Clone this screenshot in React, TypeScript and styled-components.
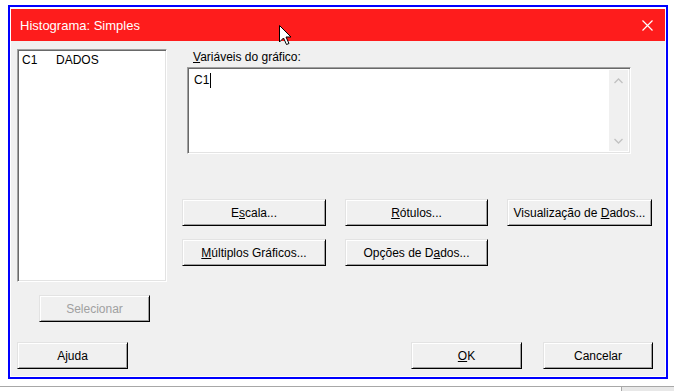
import React from 'react';
import styled, {createGlobalStyle} from 'styled-components';

const GlobalStyle = createGlobalStyle `
  html, body {
    margin: 0;
    padding: 0;
    background: #fff;
  }
  body {
    width: 674px;
    height: 391px;
    overflow: hidden;
    font-family: "Liberation Sans", Arial, sans-serif;
  }
`;

// accelerator letters are underlined like in the win32 dialog
const buttonsTop = [
    {label: <>E<u>s</u>cala...</>, width: 144},
    {label: <><u>R</u>ótulos...</>, width: 143},
    {label: <>Visualização de <u>D</u>ados...</>, width: 145}
];

const buttonsBottom = [
    {label: <><u>M</u>últiplos Gráficos...</>, width: 144},
    {label: <>Opções de D<u>a</u>dos...</>, width: 143}
];

const App: React.FC = () => {
    return (
        <Page>
            <GlobalStyle/>
            <Window>
                <TitleBar>
                    <Title>Histograma: Simples</Title>
                    <CloseIcon viewBox="0 0 11 11">
                        <path d="M0.5 0.5 L10.5 10.5 M10.5 0.5 L0.5 10.5" stroke="#fff" strokeWidth="1.2"/>
                    </CloseIcon>
                </TitleBar>

                <Body>
                    <TopArea>
                        <LeftColumn>
                            <ListBox>
                                <ListRow>
                                    <ColId>C1</ColId>
                                    <span>DADOS</span>
                                </ListRow>
                            </ListBox>
                            <Button width={111} offset={22} disabled>Selecionar</Button>
                        </LeftColumn>

                        <RightColumn>
                            <FieldLabel><u>V</u>ariáveis do gráfico:</FieldLabel>
                            <TextArea>
                                <TextContent>
                                    C1<Caret/>
                                </TextContent>
                                <ScrollBar>
                                    <svg width="9" height="6" viewBox="0 0 9 6">
                                        <path d="M0.5 5 L4.5 1 L8.5 5" stroke="#c2c2c2" strokeWidth="1.3" fill="none"/>
                                    </svg>
                                    <svg width="9" height="6" viewBox="0 0 9 6">
                                        <path d="M0.5 1 L4.5 5 L8.5 1" stroke="#c2c2c2" strokeWidth="1.3" fill="none"/>
                                    </svg>
                                </ScrollBar>
                            </TextArea>

                            <ButtonRow top={45}>
                                {buttonsTop.map((b, i) => (
                                    <Button key={i} width={b.width}>{b.label}</Button>
                                ))}
                            </ButtonRow>
                            <ButtonRow top={13}>
                                {buttonsBottom.map((b, i) => (
                                    <Button key={i} width={b.width}>{b.label}</Button>
                                ))}
                            </ButtonRow>
                        </RightColumn>
                    </TopArea>

                    <Footer>
                        <Button width={111}>Ajuda</Button>
                        <FooterRight>
                            <Button width={111}><u>O</u>K</Button>
                            <Button width={110}>Cancelar</Button>
                        </FooterRight>
                    </Footer>
                </Body>
            </Window>

            <Taskbar>
                <TaskbarSlot/>
            </Taskbar>

            <Cursor viewBox="0 0 13 21" width="13" height="21">
                <path
                    d="M0.5 0.5 L0.5 17 L4.5 13 L7.5 19.5 L10 18.5 L7 12 L12 12 Z"
                    fill="#fff"
                    stroke="#000"
                    strokeWidth="1"
                    strokeLinejoin="miter"/>
            </Cursor>
        </Page>
    );
};

export default App;

// styled-components

const Page = styled.div `
  position: relative;
  width: 674px;
  height: 391px;
  display: flex;
  flex-direction: column;
`;

const Window = styled.div `
  box-sizing: border-box;
  margin: 5px 0 0 8px;
  width: 660px;
  height: 374px;
  border: 2px solid #0000ff;
  padding: 2px 1px 1px 1px;
  background: #fff;
  display: flex;
  flex-direction: column;
`;

const TitleBar = styled.div `
  height: 32px;
  flex-shrink: 0;
  background: #fe1c1c;
  display: flex;
  align-items: center;
  justify-content: space-between;
  padding: 0 12px 0 9px;
`;

const Title = styled.span `
  color: #fff;
  font-size: 13px;
  font-family: "Liberation Sans", Arial, sans-serif;
`;

const CloseIcon = styled.svg `
  width: 11px;
  height: 11px;
`;

const Body = styled.div `
  flex: 1;
  background: #f0f0f0;
  padding: 8px 0 0 6px;
  display: flex;
  flex-direction: column;
  font-size: 12px;
  color: #000;
`;

const TopArea = styled.div `
  display: flex;
  gap: 15px;
`;

const LeftColumn = styled.div `
  display: flex;
  flex-direction: column;
  width: 150px;
  gap: 13px;
`;

const sunken = `
  box-sizing: border-box;
  background: #fff;
  border: 1px solid;
  border-color: #a0a0a0 #ffffff #ffffff #a0a0a0;
  box-shadow: inset 1px 1px 0 #696969, inset -1px -1px 0 #e3e3e3;
`;

const ListBox = styled.div `
  ${sunken}
  height: 233px;
  padding: 3px 4px;
`;

const ListRow = styled.div `
  display: flex;
  line-height: 14px;
`;

const ColId = styled.span `
  width: 34px;
`;

const RightColumn = styled.div `
  display: flex;
  flex-direction: column;
`;

const FieldLabel = styled.div `
  margin: 1px 0 0 11px;
  line-height: 14px;
  height: 17px;
`;

const TextArea = styled.div `
  ${sunken}
  margin-left: 5px;
  width: 444px;
  height: 87px;
  display: flex;
  justify-content: space-between;
  padding: 2px 2px 2px 2px;
`;

const TextContent = styled.div `
  padding: 3px 0 0 4px;
  line-height: 14px;
  display: flex;
  align-items: flex-start;
`;

const Caret = styled.span `
  display: inline-block;
  width: 1px;
  height: 15px;
  background: #000;
  margin-left: 1px;
`;

const ScrollBar = styled.div `
  width: 19px;
  background: #f0f0f0;
  display: flex;
  flex-direction: column;
  justify-content: space-between;
  align-items: center;
  padding: 8px 0 7px;
  box-sizing: border-box;
`;

const ButtonRow = styled.div < {
    top: number
} > `
  display: flex;
  gap: 19px;
  margin-top: ${ (props) => props.top}px;
`;

const Button = styled.button < {
    width: number,
    offset?: number
} > `
  box-sizing: border-box;
  width: ${ (props) => props.width}px;
  height: 27px;
  margin-left: ${ (props) => props.offset || 0}px;
  background: #f0f0f0;
  border: 1px solid;
  border-color: #e3e3e3 #000000 #000000 #e3e3e3;
  box-shadow: inset 1px 1px 0 #ffffff, inset -1px -1px 0 #a0a0a0;
  font-family: "Liberation Sans", Arial, sans-serif;
  font-size: 12px;
  color: #000;
  padding: 0;
  cursor: default;

  &:disabled {
    color: #a0a0a0;
  }
`;

const Footer = styled.div `
  display: flex;
  justify-content: space-between;
  margin-top: 20px;
  padding-right: 12px;
`;

const FooterRight = styled.div `
  display: flex;
  gap: 21px;
`;

const Taskbar = styled.div `
  margin-top: 7px;
  flex: 1;
  border-top: 1px solid #a8a8a8;
  display: flex;
  justify-content: flex-end;
`;

const TaskbarSlot = styled.div `
  width: 52px;
  background: #e8e8e8;
  border-left: 1px solid #a8a8a8;
`;

const Cursor = styled.svg `
  position: absolute;
  left: 279px;
  top: 25px;
`;
